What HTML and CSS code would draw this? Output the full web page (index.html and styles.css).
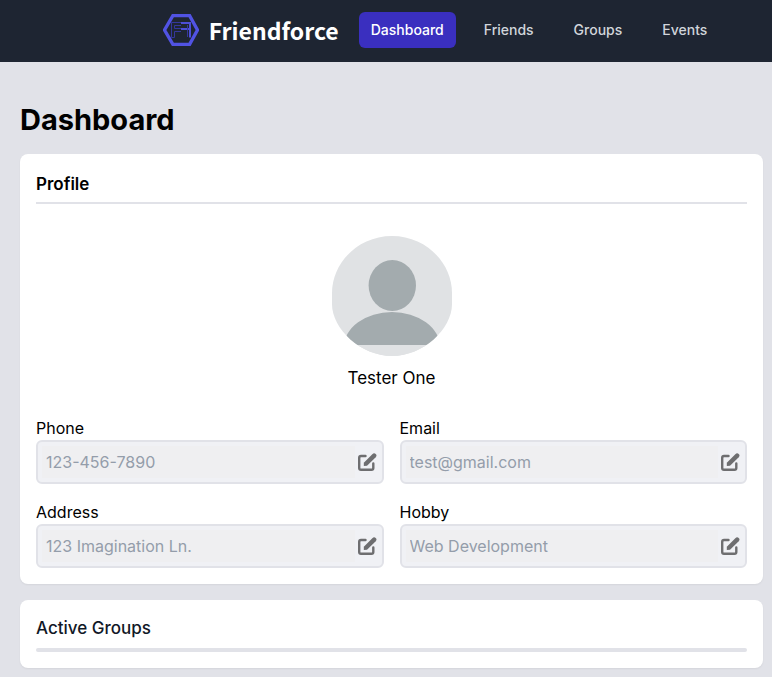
FILE: index.html
```html
<!DOCTYPE html>
<html lang="en">
<head>
<meta charset="utf-8">
<meta name="viewport" content="width=device-width, initial-scale=1">
<title>Friendforce</title>
<link rel="stylesheet" href="styles.css">
</head>
<body>
<svg class="sprite" aria-hidden="true">
  <symbol id="edit" viewBox="0 0 20 20">
    <path d="M8.5 4H4Q2.200 4 2.200 5.800V16Q2.200 17.800 4 17.800H14.500Q16.300 17.800 16.300 16V11.500" fill="none" stroke="currentColor" stroke-width="2.400" stroke-linecap="round"/>
    <path d="M6.800 14V10.700L15.300 2.200Q17.100 .5 18.700 1.900Q20.300 3.500 18.700 5.300L10 13.700Z" fill="currentColor"/>
  </symbol>
</svg>
<header class="topbar">
  <a class="brand" href="#">
    <svg class="brand-mark" viewBox="0 0 36 32" aria-hidden="true">
      <path d="M10 1.500H26.500L34.500 16L26.500 30.500H10L1.500 16Z" fill="none" stroke="#5153e3" stroke-width="3.400"/>
      <path d="M8.500 23.500V8.500H18M11.500 23.500V17.500H18M11.500 14.500V11.500H18M11.500 14.500H18M8.500 23.500H11.500" fill="none" stroke="#34379c" stroke-width="1"/>
      <path d="M18 9H27V23.500M18 15H26" fill="none" stroke="#4d4fd8" stroke-width="2"/>
      <path d="M24.500 11V23" fill="none" stroke="#34379c" stroke-width="1"/>
    </svg>
    <span>Friendforce</span>
  </a>
  <nav class="links">
    <a class="link active" href="#" aria-current="page">Dashboard</a>
    <a class="link" href="#">Friends</a>
    <a class="link" href="#">Groups</a>
    <a class="link" href="#">Events</a>
  </nav>
</header>
<main class="page">
  <h1>Dashboard</h1>
  <section class="card">
    <h2>Profile</h2>
    <hr class="rule">
    <div class="person">
      <svg class="avatar" viewBox="0 0 120 120" role="img" aria-label="Profile picture">
        <clipPath id="disc"><path d="M60 0C94 0 120 27 120 57V68C120 93 91 120 60 120S0 93 0 68V57C0 27 26 0 60 0Z"/></clipPath>
        <g clip-path="url(#disc)">
          <rect width="120" height="120" fill="#e0e2e4"/>
          <ellipse cx="60.300" cy="49.500" rx="23.700" ry="25.500" fill="#a3abae"/>
          <path d="M12 109V111A48 35 0 0 1 108 111V109Z" fill="#a3abae"/>
          <rect y="109" width="120" height="11" fill="#e0e2e4"/>
        </g>
      </svg>
      <p class="name">Tester One</p>
    </div>
    <form class="fields">
      <div class="field">
        <label for="phone">Phone</label>
        <div class="box"><input id="phone" type="text" placeholder="123-456-7890" disabled><button type="button" aria-label="Edit phone"><svg class="icon"><use href="#edit"/></svg></button></div>
      </div>
      <div class="field">
        <label for="email">Email</label>
        <div class="box"><input id="email" type="text" placeholder="test@gmail.com" disabled><button type="button" aria-label="Edit email"><svg class="icon"><use href="#edit"/></svg></button></div>
      </div>
      <div class="field">
        <label for="address">Address</label>
        <div class="box"><input id="address" type="text" placeholder="123 Imagination Ln." disabled><button type="button" aria-label="Edit address"><svg class="icon"><use href="#edit"/></svg></button></div>
      </div>
      <div class="field">
        <label for="hobby">Hobby</label>
        <div class="box"><input id="hobby" type="text" placeholder="Web Development" disabled><button type="button" aria-label="Edit hobby"><svg class="icon"><use href="#edit"/></svg></button></div>
      </div>
    </form>
  </section>
  <section class="card">
    <h2 class="groups-title">Active Groups</h2>
    <hr class="rule thick">
  </section>
</main>
</body>
</html>
```
FILE: styles.css
```css
* { box-sizing: border-box; margin: 0; padding: 0; }

body {
  background: #e1e2e8;
  color: #000;
  font: 16px/24px Inter, "Liberation Sans", sans-serif;
}

a { color: inherit; text-decoration: none; }

.sprite { display: none; }

.topbar {
  display: flex;
  align-items: center;
  justify-content: center;
  gap: 20px;
  padding: 12px 0 14px 110px;
  background: #1e2532;
}

.brand {
  display: flex;
  align-items: center;
  gap: 10px;
  color: #fff;
  font: 700 23px/36px "Noto Sans CJK SC", "Noto Sans", sans-serif;
}

.brand-mark { width: 36px; height: 32px; }

.links { display: flex; gap: 16px; }

.link {
  padding: 8px 12px;
  border-radius: 6px;
  color: #d1d5db;
  font-size: 14px;
  font-weight: 500;
  line-height: 20px;
}

.link.active { background: #3a2fbf; color: #fff; }

.page {
  display: flex;
  flex-direction: column;
  gap: 16px;
  padding: 40px 9px 16px 20px;
}

h1 { font-size: 29px; line-height: 36px; font-weight: 700; }

.card {
  padding: 16px;
  border-radius: 8px;
  background: #fff;
  box-shadow: 0 1px 2px rgba(0, 0, 0, .06);
}

h2 { font-size: 17px; line-height: 28px; font-weight: 600; }

.groups-title { color: #111827; font-weight: 500; line-height: 24px; }

.rule {
  height: 2px;
  margin-top: 4px;
  border: 0;
  background: #e1e2e8;
}

.rule.thick { height: 4px; margin-top: 8px; border-radius: 2px; }

.person {
  display: flex;
  flex-direction: column;
  align-items: center;
  gap: 8px;
  padding: 32px 0 24px;
}

.avatar { width: 120px; height: 120px; }

.name { font-size: 17px; line-height: 28px; }

.fields {
  display: grid;
  grid-template-columns: 1fr 1fr;
  gap: 16px;
}

.field { min-width: 0; }

.field label { display: block; }

.box {
  display: flex;
  align-items: center;
  padding: 4px 5px 4px 4px;
  border: 2px solid #e1e2e8;
  border-radius: 6px;
  background: #f0f1f5;
}

.box input {
  flex: 1;
  min-width: 0;
  height: 32px;
  padding: 0 4px;
  border: 0;
  background: #efeff1;
  font: inherit;
}

.box input::placeholder { color: #949daa; opacity: 1; }

.box button {
  display: flex;
  padding-left: 2px;
  border: 0;
  background: none;
  color: #6e6e70;
}

.icon { width: 20px; height: 20px; }
```
